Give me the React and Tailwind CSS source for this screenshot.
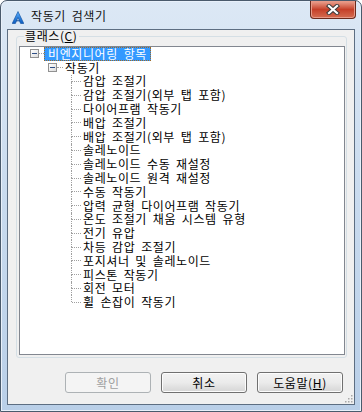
import React from "react";

const items = [
  "감압 조절기",
  "감압 조절기(외부 탭 포함)",
  "다이어프램 작동기",
  "배압 조절기",
  "배압 조절기(외부 탭 포함)",
  "솔레노이드",
  "솔레노이드 수동 재설정",
  "솔레노이드 원격 재설정",
  "수동 작동기",
  "압력 균형 다이어프램 작동기",
  "온도 조절기 채움 시스템 유형",
  "전기 유압",
  "차등 감압 조절기",
  "포지셔너 및 솔레노이드",
  "피스톤 작동기",
  "회전 모터",
  "휠 손잡이 작동기",
];

function MinusBox() {
  return (
    <div className="w-[9px] h-[9px] shrink-0 border border-[#919191] bg-gradient-to-br from-white to-[#dcdcdc] flex items-center justify-center">
      <div className="w-[5px] h-[1px] bg-[#2f4f86]" />
    </div>
  );
}

function Item({ text, last }) {
  return (
    <div className="flex h-[13.8px] items-center">
      <div className="w-[51px] shrink-0" />
      <div className="w-[1px] self-stretch flex flex-col shrink-0">
        <div className="flex-1 border-l border-dotted border-[#a0a0a0]" />
        <div className={last ? "flex-1" : "flex-1 border-l border-dotted border-[#a0a0a0]"} />
      </div>
      <div className="w-[9px] shrink-0 border-t border-dotted border-[#a0a0a0]" />
      <span className="ml-[2px] whitespace-nowrap leading-[12px]">{text}</span>
    </div>
  );
}

function Button({ children, disabled }) {
  return (
    <div
      className={
        disabled
          ? "w-[86px] h-[21px] rounded-[3px] border border-[#adb2b5] bg-[#f4f4f4] text-[#a0a0a0] flex items-center justify-center"
          : "w-[86px] h-[21px] rounded-[3px] border border-[#707070] bg-gradient-to-b from-[#f2f2f2] via-[#ebebeb] to-[#d5d5d5] text-black flex items-center justify-center shadow-[inset_0_0_0_1px_#fcfcfc]"
      }
    >
      {children}
    </div>
  );
}

export default function App() {
  return (
    <div className="w-[362px] h-[412px] bg-white font-['Noto_Sans_CJK_KR',sans-serif] text-[12px] leading-[13px] tracking-[0.6px] [word-spacing:2.5px] text-black">
      <div className="w-[362px] h-[412px] rounded-t-[7px] border border-[#4a5a6c] bg-gradient-to-b from-[#dce8f5] via-[#c8daee] to-[#b9cfe8] flex flex-col shadow-[inset_0_0_0_1px_#e8f0fa]">
        {/* Title bar */}
        <div className="h-[28px] flex items-start">
          <div className="ml-[11px] mt-[10px] w-[12px] h-[13px]">
            <svg width="12" height="13" viewBox="0 0 12 13">
              <defs>
                <linearGradient id="ag" x1="0" y1="0" x2="0" y2="1">
                  <stop offset="0" stopColor="#5ab0ff" />
                  <stop offset="1" stopColor="#0b5cc0" />
                </linearGradient>
              </defs>
              <path d="M6 0.5 L11.8 12.5 H8.6 L6 6.5 L3.4 12.5 H0.2 Z" fill="url(#ag)" stroke="#0a4a9a" strokeWidth="0.6" />
              <path d="M4.2 9.8 H7.8" stroke="#0a4a9a" strokeWidth="1" />
            </svg>
          </div>
          <div className="ml-[7px] mt-[8px] text-[12px] leading-[14px] text-[#111]">작동기 검색기</div>
          <div className="ml-auto mr-[5px] w-[46px] h-[18px] rounded-b-[4px] border border-t-0 border-[#6b2a1c] bg-gradient-to-b from-[#eba493] via-[#c53f28] to-[#d46c50] flex items-center justify-center shadow-[inset_0_0_0_1px_#e79a88]">
            <svg width="14" height="11" viewBox="0 0 14 11">
              <path d="M3 2 L11 9 M11 2 L3 9" stroke="#3b3b3b" strokeWidth="4.2" strokeLinecap="square" />
              <path d="M3 2 L11 9 M11 2 L3 9" stroke="#ffffff" strokeWidth="2.2" strokeLinecap="square" />
            </svg>
          </div>
        </div>

        {/* Client */}
        <div className="flex-1 ml-[6px] mr-[6px] mb-[6px] border border-[#5d6e82] bg-[#f0f0f0] flex flex-col">
          <fieldset className="ml-[8px] mr-[7px] mt-[0px] border border-[#d5dfe5] rounded-[3px] pl-[2px] pr-[1px] pb-[2px]">
            <legend className="ml-[5px] px-[1px] leading-[12px]">
              클래스(<span className="underline">C</span>)
            </legend>
            <div className="mt-[4px] h-[309px] border border-[#828790] bg-white overflow-hidden">
              {/* root */}
              <div className="flex h-[13.8px] items-center">
                <div className="w-[10px] shrink-0" />
                <MinusBox />
                <div className="w-[5px] shrink-0 border-t border-dotted border-[#a0a0a0]" />
                <span className="h-[13.8px] px-[3px] bg-[#3399ff] text-white border border-dotted border-[#9b6a2a] flex items-center whitespace-nowrap leading-[12px]">
                  비엔지니어링 항목
                </span>
              </div>
              {/* 작동기 */}
              <div className="flex h-[13.8px] items-center">
                <div className="w-[28px] shrink-0" />
                <MinusBox />
                <div className="w-[6px] shrink-0 border-t border-dotted border-[#a0a0a0]" />
                <span className="ml-[2px] whitespace-nowrap leading-[12px]">작동기</span>
              </div>
              {items.map((t, i) => (
                <Item key={t} text={t} last={i === items.length - 1} />
              ))}
            </div>
          </fieldset>

          <div className="mt-[14px] flex justify-end gap-[10px] pr-[11px]">
            <Button disabled>확인</Button>
            <Button>취소</Button>
            <Button>
              <span>
                도움말(<span className="underline">H</span>)
              </span>
            </Button>
          </div>

          <div className="mt-auto mb-[1px] mr-[1px] flex justify-end">
            <svg width="8" height="8" viewBox="0 0 8 8">
              <g fill="#a8a8a8">
                <rect x="6" y="0" width="1.5" height="1.5" />
                <rect x="3" y="3" width="1.5" height="1.5" />
                <rect x="6" y="3" width="1.5" height="1.5" />
                <rect x="0" y="6" width="1.5" height="1.5" />
                <rect x="3" y="6" width="1.5" height="1.5" />
                <rect x="6" y="6" width="1.5" height="1.5" />
              </g>
            </svg>
          </div>
        </div>
      </div>
    </div>
  );
}
